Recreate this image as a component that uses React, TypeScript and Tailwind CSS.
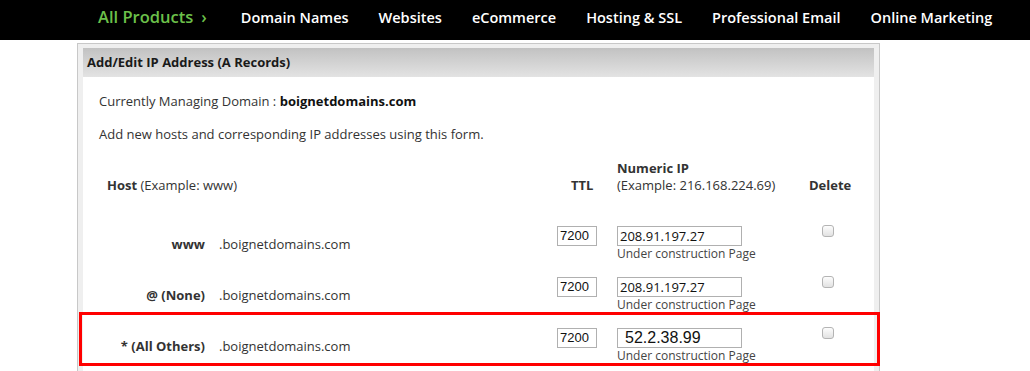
import React from 'react';

// nav items across the black top bar
const navItems = ['Domain Names', 'Websites', 'eCommerce', 'Hosting & SSL', 'Professional Email', 'Online Marketing'];

interface HostRow {
  label: string;
  ttl: string;
  ip: string;
  big?: boolean;
  highlight?: boolean;
}

const rows: HostRow[] = [
  { label: 'www', ttl: '7200', ip: '208.91.197.27' },
  { label: '@ (None)', ttl: '7200', ip: '208.91.197.27' },
  { label: '* (All Others)', ttl: '7200', ip: '52.2.38.99', big: true, highlight: true },
];

function Checkbox() {
  return (
    <span className="block w-[12px] h-[12px] rounded-[3px] border border-[#b4b4b4] bg-gradient-to-b from-[#fdfdfd] to-[#e2e2e2]" />
  );
}

function RecordRow({ row }: { row: HostRow }) {
  return (
    <div className="relative flex h-[51px]">
      {row.highlight && (
        <div className="absolute -left-[20px] -top-[6px] w-[801px] h-[54px] border-[3px] border-[#f00]" />
      )}
      <div className="w-[120px] pr-[14px] pt-[19px] text-right font-bold leading-[18px]">{row.label}</div>
      <div className="w-[338px] pt-[19px] leading-[18px]">.boignetdomains.com</div>
      <div className="w-[60px] pt-[10px]">
        <div className="w-[40px] h-[20px] border border-[#b0b0b0] pl-[2px] flex items-center font-['Liberation_Sans',sans-serif] text-[13px] text-[#111]">
          {row.ttl}
        </div>
      </div>
      <div className="w-[191px] pt-[10px]">
        <div
          className={
            row.big
              ? "w-[125px] h-[20px] border border-[#b0b0b0] pl-[7px] flex items-center font-['Liberation_Sans',sans-serif] text-[16px] text-[#111]"
              : 'w-[125px] h-[20px] border border-[#b0b0b0] pl-[2px] flex items-center text-[13px] text-[#111]'
          }
        >
          {row.ip}
        </div>
        <div className="text-[12px] leading-[14px] text-[#444] mt-[1px]">Under construction Page</div>
      </div>
      <div className="pl-[14px] pt-[9px]">
        <Checkbox />
      </div>
    </div>
  );
}

export default function App() {
  return (
    <div className="w-[1030px] h-[371px] overflow-hidden bg-white font-['Open_Sans',sans-serif] text-[#333]">
      <div className="h-[40px] bg-black flex items-center pl-[98px] pb-[5px] text-[14.5px] font-semibold text-white whitespace-nowrap">
        <span className="shrink-0 text-[16.5px] text-[#6cc04a]">
          All Products<span className="ml-[8px]">›</span>
        </span>
        <div className="flex gap-[30px] ml-[34px]">
          {navItems.map(item => (
            <span key={item} className="shrink-0">{item}</span>
          ))}
        </div>
      </div>

      <div className="ml-[77px] mt-[3px] w-[803px] border border-[#c8c8c8] bg-[#efefef] px-[5px] pt-[4px]">
        <div className="h-[29px] bg-gradient-to-b from-[#c2c2c2] to-[#e3e3e3] flex items-center pl-[4px] text-[13px] font-bold text-[#1a1a1a]">
          Add/Edit IP Address (A Records)
        </div>

        <div className="bg-white pl-[16px] pt-[15px] pb-[20px] text-[13px] leading-[18px]">
          <p>
            Currently Managing Domain : <span className="font-bold text-[#111]">boignetdomains.com</span>
          </p>
          <p className="mt-[15px]">Add new hosts and corresponding IP addresses using this form.</p>

          {/* table header */}
          <div className="flex items-end mt-[17px] mb-[22px] leading-[17px]">
            <div className="w-[458px] pl-[8px]">
              <span className="font-bold">Host</span> (Example: www)
            </div>
            <div className="w-[60px] pl-[14px] font-bold">TTL</div>
            <div className="w-[191px]">
              <div className="font-bold">Numeric IP</div>
              <div>(Example: 216.168.224.69)</div>
            </div>
            <div className="pl-[1px] font-bold">Delete</div>
          </div>

          {rows.map(row => (
            <RecordRow key={row.label} row={row} />
          ))}
        </div>
      </div>
    </div>
  );
}
